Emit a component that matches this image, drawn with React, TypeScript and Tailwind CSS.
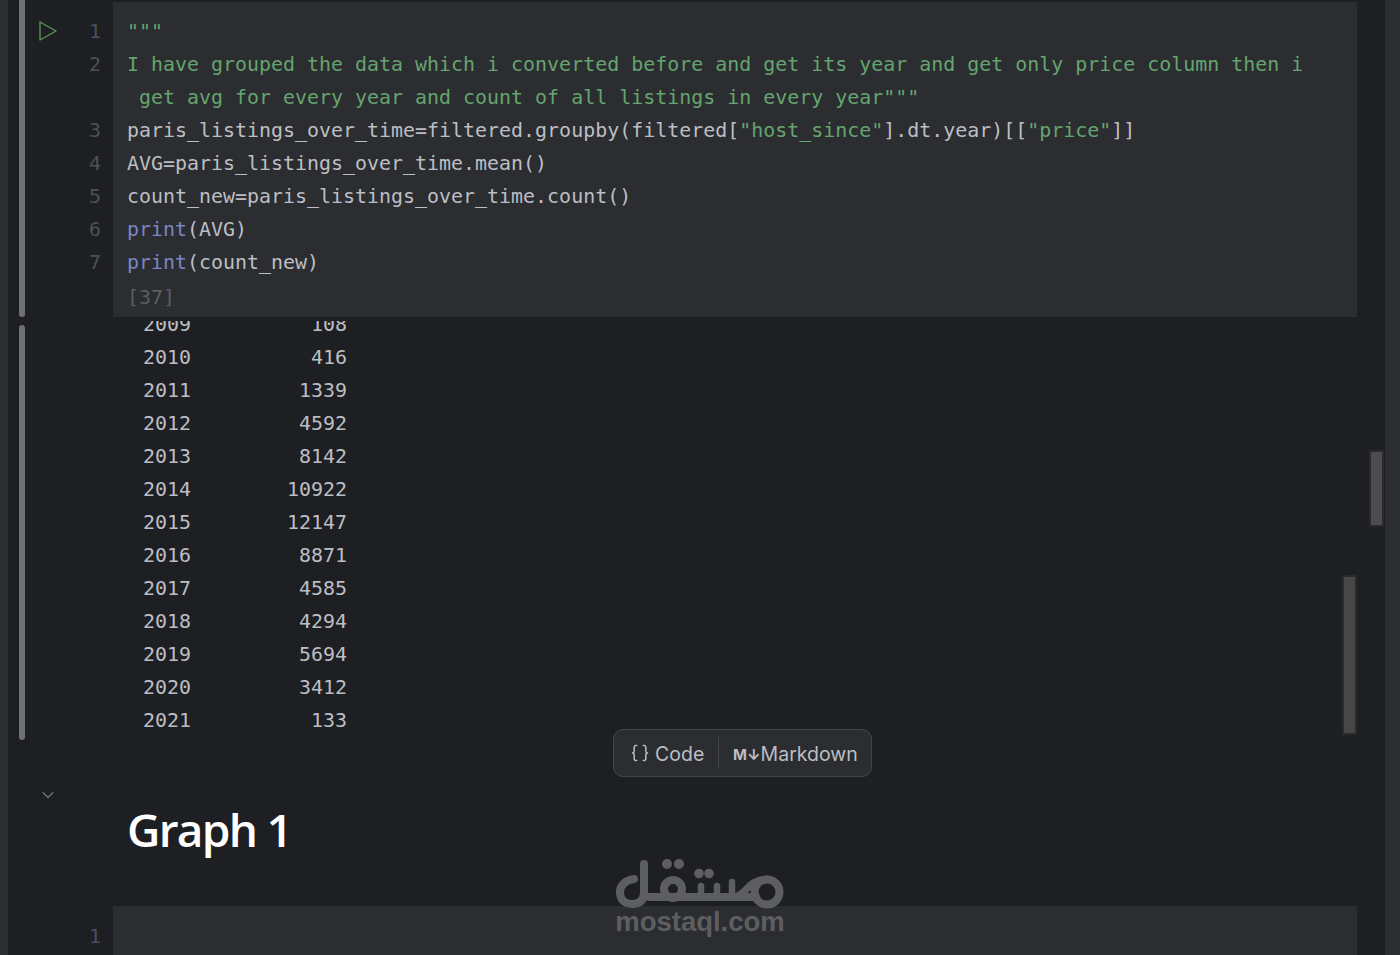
import { Braces, ChevronDown } from "lucide-react";

const codeFont = "font-['DejaVu_Sans_Mono',monospace] text-[19.94px] leading-[33px] whitespace-pre";

const green = "text-[#65a46f]";
const plain = "text-[#bcbec4]";
const blue = "text-[#7a86c4]";

const outputRows = [
  ["2009", "108"],
  ["2010", "416"],
  ["2011", "1339"],
  ["2012", "4592"],
  ["2013", "8142"],
  ["2014", "10922"],
  ["2015", "12147"],
  ["2016", "8871"],
  ["2017", "4585"],
  ["2018", "4294"],
  ["2019", "5694"],
  ["2020", "3412"],
  ["2021", "133"],
];

function LineNo({ n }: { n?: number }) {
  return <div className={`${codeFont} h-[33px] text-right text-[#4b5059]`}>{n ?? " "}</div>;
}

function Logo() {
  return (
    <svg width="170" height="52" viewBox="0 0 170 52" fill="none" stroke="#5d5e60" strokeWidth="8" strokeLinecap="round" strokeLinejoin="round">
      <path d="M29 5V33C29 41 25 45 17 45C9 45 5 40 5 33C5 26 11 21 19 20" />
      <path d="M29 36C31 38 33 38 36 38H141" />
      <circle cx="58" cy="30" r="9" />
      <path d="M86 38V27M102 38V27M117 38V23" strokeWidth="6.5" />
      <path d="M122 37C131 35 134 20 152 20" strokeWidth="7" />
      <circle cx="152" cy="33" r="12.5" />
      <g fill="#5d5e60" stroke="none">
        <circle cx="52" cy="5" r="5" />
        <circle cx="64" cy="5" r="5" />
        <circle cx="84" cy="14.5" r="4.8" />
        <circle cx="94" cy="14.5" r="4.8" />
      </g>
    </svg>
  );
}

export default function App() {
  return (
    <div className="relative flex h-[955px] w-[1400px] overflow-hidden bg-[#1e1f22]">
      {/* Left strip */}
      <div className="w-2 shrink-0 bg-[#2b2d30]" />

      {/* Notebook */}
      <div className="flex-1 min-w-0 pr-[28px] pt-0.5">
        {/* Code cell */}
        <div className="flex h-[315px]">
          <div className="flex w-[105px] shrink-0">
            <div className="ml-[11px] -mt-0.5 h-[317px] w-[6px] rounded-b-full bg-[#6f7073]" />
            <div className="ml-[13px] mt-[18px] h-[22px] w-[20px]">
              <svg width="20" height="22" viewBox="0 0 20 22" fill="none" stroke="#5a8f58" strokeWidth="1.4" strokeLinejoin="round">
                <path d="M2 2L18 11L2 20Z" />
              </svg>
            </div>
            <div className="ml-[22px] w-[21px] pt-[13px]">
              <LineNo n={1} />
              <LineNo n={2} />
              <LineNo />
              <LineNo n={3} />
              <LineNo n={4} />
              <LineNo n={5} />
              <LineNo n={6} />
              <LineNo n={7} />
            </div>
          </div>
          <div className="flex-1 bg-[#2b2d30] pl-[14px] pt-[13px]">
            <div className={`${codeFont} ${green}`}>{'"""'}</div>
            <div className={`${codeFont} ${green}`}>
              I have grouped the data which i converted before and get its year and get only price column then i
            </div>
            <div className={`${codeFont} ${green}`}>{' get avg for every year and count of all listings in every year"""'}</div>
            <div className={`${codeFont} ${plain}`}>
              paris_listings_over_time=filtered.groupby(filtered[<span className={green}>"host_since"</span>].dt.year)[[<span className={green}>"price"</span>]]
            </div>
            <div className={`${codeFont} ${plain}`}>AVG=paris_listings_over_time.mean()</div>
            <div className={`${codeFont} ${plain}`}>count_new=paris_listings_over_time.count()</div>
            <div className={`${codeFont} ${plain}`}>
              <span className={blue}>print</span>(AVG)
            </div>
            <div className={`${codeFont} ${plain}`}>
              <span className={blue}>print</span>(count_new)
            </div>
            <div className={`${codeFont} mt-0.5 text-[#5a5d63]`}>[37]</div>
          </div>
        </div>

        {/* Output */}
        <div className="flex h-[425px]">
          <div className="w-[105px] shrink-0">
            <div className="ml-[11px] mt-2 h-[415px] w-[6px] rounded-full bg-[#6f7073]" />
          </div>
          <div className="relative flex-1">
            <div className="mt-1 h-[421px] overflow-hidden pl-[30px]">
              <div className={`${codeFont} -mt-[13px] ${plain}`}>
                {outputRows.map(([year, count]) => (
                  <div key={year} className="flex h-[33px] w-[204px] justify-between">
                    <span>{year}</span>
                    <span>{count}</span>
                  </div>
                ))}
              </div>
            </div>
            {/* Output scrollbar */}
            <div className="absolute right-0 top-[258px] h-[160px] w-[15px] border-2 border-[#292a2c] bg-[#474748]" />
          </div>
        </div>

        {/* Markdown cell */}
        <div className="flex h-[164px]">
          <div className="w-[105px] shrink-0 pl-[30px] pt-[43px]">
            <ChevronDown size={20} strokeWidth={1.5} className="text-[#6f7278]" />
          </div>
          <div className="flex-1 pl-[14px] pt-[57px]">
            <h1 className="font-['Open_Sans',sans-serif] text-[46px] font-semibold leading-[60px] tracking-[-1.7px] text-white">
              Graph 1
            </h1>
          </div>
        </div>

        {/* Next code cell */}
        <div className="flex h-[60px]">
          <div className="w-[105px] shrink-0 pl-[72px] pr-[12px] pt-[14px]">
            <LineNo n={1} />
          </div>
          <div className="flex-1 bg-[#2b2d30]" />
        </div>
      </div>

      {/* Right strip */}
      <div className="w-[15px] shrink-0 bg-[#2b2d30]" />

      {/* Editor scrollbar */}
      <div className="absolute left-[1369px] top-[450px] h-[77px] w-[15px] border-2 border-[#292a2c] bg-[#4d4d4e]" />

      {/* Add cell bar */}
      <div className="absolute left-[613px] top-[729px] flex h-[48px] w-[259px] items-center rounded-[10px] border border-[#43454a] bg-[#2b2d30] font-['Inter',sans-serif] text-[19.5px] text-[#bcbec4]">
        <div className="flex h-[32px] w-[105px] items-center gap-[5px] border-r border-[#43454a] pl-[16px] pt-1">
          <Braces size={20} strokeWidth={1.8} className="-mt-1" />
          <span>Code</span>
        </div>
        <div className="flex items-center pl-[14px] pt-1">
          <span className="text-[15px] font-bold">M↓</span>
          <span>Markdown</span>
        </div>
      </div>

      {/* Watermark */}
      <div className="absolute left-[615px] top-[859px] flex w-[170px] flex-col items-center">
        <Logo />
        <div className="-mt-[4px] font-['Liberation_Sans',sans-serif] text-[27.5px] font-bold leading-[30px] text-[#5d5e60]">mostaql.com</div>
      </div>
    </div>
  );
}
